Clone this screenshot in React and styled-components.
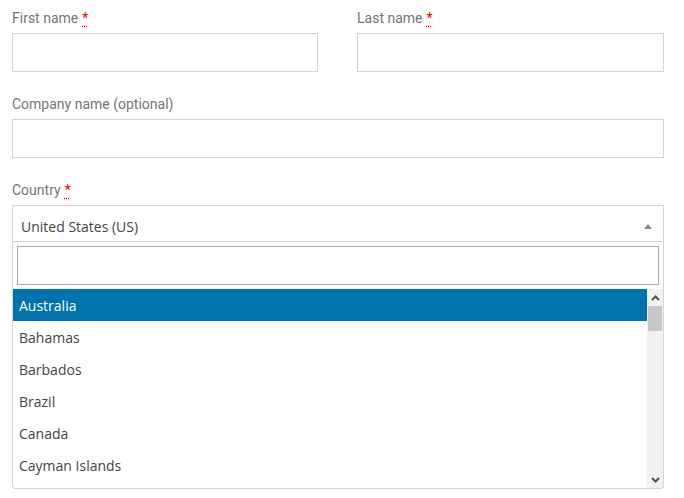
import React from "react";
import styled, { createGlobalStyle } from "styled-components";

const GlobalStyle = createGlobalStyle`
  * { box-sizing: border-box; }
  body {
    margin: 0;
    background: #fff;
    font-family: Roboto, "Liberation Sans", sans-serif;
  }
`;

const Form = styled.div`
  width: 652px;
  margin: 8px 0 0 12px;
`;

const Row = styled.div`
  display: grid;
  grid-template-columns: ${(p) => (p.$split ? "306px 307px" : "1fr")};
  column-gap: 39px;
  margin-bottom: 22px;
`;

const Field = styled.div`
  display: flex;
  flex-direction: column;
`;

const Label = styled.label`
  font-size: 14px;
  line-height: 19px;
  padding-top: 1px;
  color: #767676;
  margin-bottom: 5px;
`;

const Required = styled.abbr`
  color: #e00;
  text-decoration: underline dotted;
  text-underline-offset: 3px;
  margin-left: 4px;
`;

const Input = styled.div`
  height: 39px;
  border: 1px solid #d4d4d4;
  background: #fff;
`;

const Select = styled.div`
  height: 37px;
  border: 1px solid #d4d4d4;
  display: flex;
  align-items: center;
  justify-content: space-between;
  padding: 6px 11px 0 8px;
  font-family: "Open Sans", sans-serif;
  font-size: 14px;
  color: #444;
`;

const Caret = styled.span`
  width: 0;
  height: 0;
  border-left: 4px solid transparent;
  border-right: 4px solid transparent;
  border-bottom: 5px solid #888;
`;

const Dropdown = styled.div`
  border: 1px solid #d4d4d4;
  border-top: none;
  border-radius: 0 0 4px 4px;
  overflow: hidden;
`;

const SearchWrap = styled.div`
  padding: 4px;
`;

const Search = styled.div`
  height: 39px;
  border: 1px solid #aaa;
`;

const ResultsBox = styled.div`
  display: flex;
  height: 199px;
`;

const Results = styled.ul`
  flex: 1;
  list-style: none;
  margin: 0;
  padding: 0;
  overflow: hidden;
  font-family: "Open Sans", sans-serif;
  font-size: 14px;
`;

const Option = styled.li`
  height: 32px;
  line-height: 31px;
  padding: 1px 6px 0;
  color: ${(p) => (p.$active ? "#fff" : "#444")};
  background: ${(p) => (p.$active ? "#0073aa" : "transparent")};
`;

const Scrollbar = styled.div`
  width: 16px;
  background: #f1f1f1;
  display: flex;
  flex-direction: column;
`;

const ScrollBtn = styled.div`
  height: 17px;
  display: flex;
  align-items: center;
  justify-content: center;
`;

const Thumb = styled.div`
  height: 25px;
  margin: 0 1px;
  background: #c8c8c8;
`;

const Track = styled.div`
  flex: 1;
`;

const Chevron = ({ up }) => (
  <svg width="9" height="6" viewBox="0 0 9 6">
    <path
      d={up ? "M1 5 L4.5 1.5 L8 5" : "M1 1 L4.5 4.5 L8 1"}
      fill="none"
      stroke="#505050"
      strokeWidth="2"
    />
  </svg>
);

const countries = [
  "Australia",
  "Bahamas",
  "Barbados",
  "Brazil",
  "Canada",
  "Cayman Islands",
];

export default function App() {
  return (
    <>
      <GlobalStyle />
      <Form>
        <Row $split>
          <Field>
            <Label>
              First name<Required title="required">*</Required>
            </Label>
            <Input />
          </Field>
          <Field>
            <Label>
              Last name<Required title="required">*</Required>
            </Label>
            <Input />
          </Field>
        </Row>
        <Row>
          <Field>
            <Label>Company name (optional)</Label>
            <Input />
          </Field>
        </Row>
        <Field>
          <Label>
            Country<Required title="required">*</Required>
          </Label>
          <Select>
            <span>United States (US)</span>
            <Caret />
          </Select>
          <Dropdown>
            <SearchWrap>
              <Search />
            </SearchWrap>
            <ResultsBox>
              <Results>
                {countries.map((c, i) => (
                  <Option key={c} $active={i === 0}>
                    {c}
                  </Option>
                ))}
              </Results>
              <Scrollbar>
                <ScrollBtn>
                  <Chevron up />
                </ScrollBtn>
                <Thumb />
                <Track />
                <ScrollBtn>
                  <Chevron />
                </ScrollBtn>
              </Scrollbar>
            </ResultsBox>
          </Dropdown>
        </Field>
      </Form>
    </>
  );
}
